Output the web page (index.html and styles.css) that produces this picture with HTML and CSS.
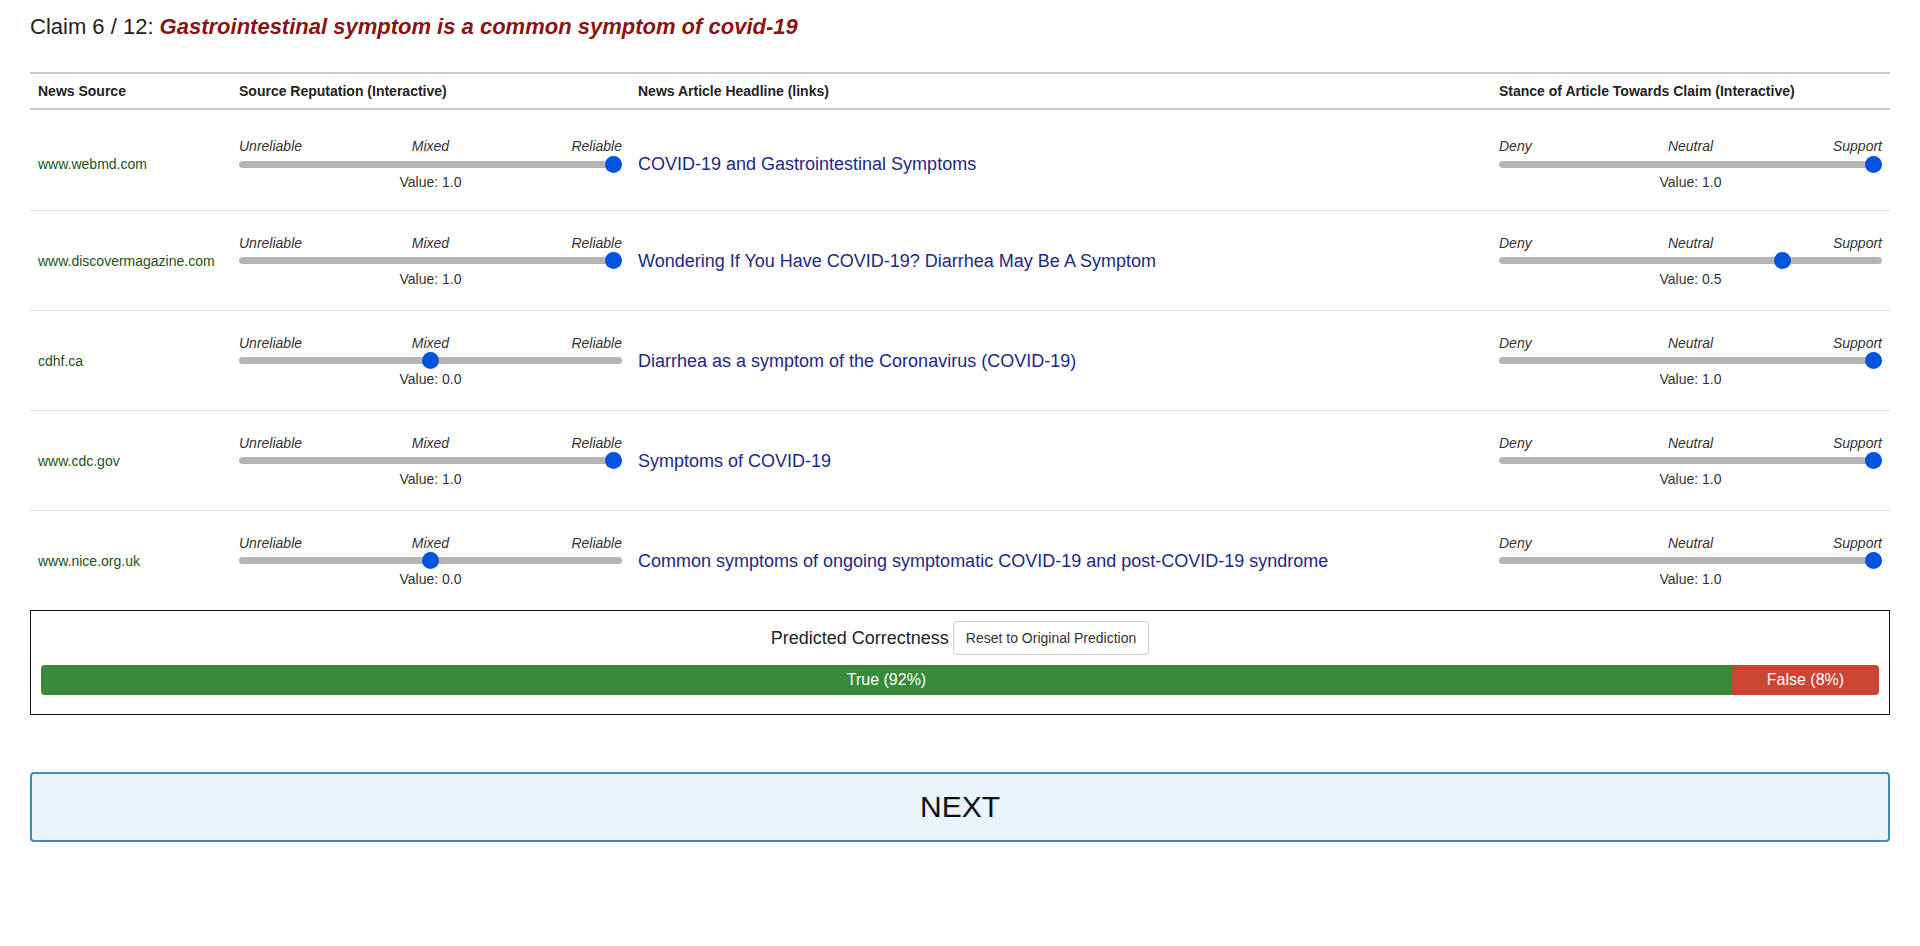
FILE: index.html
```html
<!DOCTYPE html>
<html lang="en">
<head>
<meta charset="utf-8">
<title>Claim 6 / 12</title>
<link rel="stylesheet" href="styles.css">
</head>
<body>
<div class="page">
  <h1 class="claim-title">Claim 6 / 12: <span class="claim-text">Gastrointestinal symptom is a common symptom of covid-19</span></h1>

  <div class="claim-table">
    <div class="row head">
      <div class="cell">News Source</div>
      <div class="cell">Source Reputation (Interactive)</div>
      <div class="cell">News Article Headline (links)</div>
      <div class="cell">Stance of Article Towards Claim (Interactive)</div>
    </div>

    <div class="row body">
      <div class="cell source">www.webmd.com</div>
      <div class="cell">
        <div class="slider">
          <div class="scale"><span class="l">Unreliable</span><span class="m">Mixed</span><span class="r">Reliable</span></div>
          <input type="range" min="-1" max="1" step="0.5" value="1">
          <div class="value">Value: 1.0</div>
        </div>
      </div>
      <div class="cell headline"><a href="#">COVID-19 and Gastrointestinal Symptoms</a></div>
      <div class="cell">
        <div class="slider">
          <div class="scale"><span class="l">Deny</span><span class="m">Neutral</span><span class="r">Support</span></div>
          <input type="range" min="-1" max="1" step="0.5" value="1">
          <div class="value">Value: 1.0</div>
        </div>
      </div>
    </div>

    <div class="row body">
      <div class="cell source">www.discovermagazine.com</div>
      <div class="cell">
        <div class="slider">
          <div class="scale"><span class="l">Unreliable</span><span class="m">Mixed</span><span class="r">Reliable</span></div>
          <input type="range" min="-1" max="1" step="0.5" value="1">
          <div class="value">Value: 1.0</div>
        </div>
      </div>
      <div class="cell headline"><a href="#">Wondering If You Have COVID-19? Diarrhea May Be A Symptom</a></div>
      <div class="cell">
        <div class="slider">
          <div class="scale"><span class="l">Deny</span><span class="m">Neutral</span><span class="r">Support</span></div>
          <input type="range" min="-1" max="1" step="0.5" value="0.5">
          <div class="value">Value: 0.5</div>
        </div>
      </div>
    </div>

    <div class="row body">
      <div class="cell source">cdhf.ca</div>
      <div class="cell">
        <div class="slider">
          <div class="scale"><span class="l">Unreliable</span><span class="m">Mixed</span><span class="r">Reliable</span></div>
          <input type="range" min="-1" max="1" step="0.5" value="0">
          <div class="value">Value: 0.0</div>
        </div>
      </div>
      <div class="cell headline"><a href="#">Diarrhea as a symptom of the Coronavirus (COVID-19)</a></div>
      <div class="cell">
        <div class="slider">
          <div class="scale"><span class="l">Deny</span><span class="m">Neutral</span><span class="r">Support</span></div>
          <input type="range" min="-1" max="1" step="0.5" value="1">
          <div class="value">Value: 1.0</div>
        </div>
      </div>
    </div>

    <div class="row body">
      <div class="cell source">www.cdc.gov</div>
      <div class="cell">
        <div class="slider">
          <div class="scale"><span class="l">Unreliable</span><span class="m">Mixed</span><span class="r">Reliable</span></div>
          <input type="range" min="-1" max="1" step="0.5" value="1">
          <div class="value">Value: 1.0</div>
        </div>
      </div>
      <div class="cell headline"><a href="#">Symptoms of COVID-19</a></div>
      <div class="cell">
        <div class="slider">
          <div class="scale"><span class="l">Deny</span><span class="m">Neutral</span><span class="r">Support</span></div>
          <input type="range" min="-1" max="1" step="0.5" value="1">
          <div class="value">Value: 1.0</div>
        </div>
      </div>
    </div>

    <div class="row body">
      <div class="cell source">www.nice.org.uk</div>
      <div class="cell">
        <div class="slider">
          <div class="scale"><span class="l">Unreliable</span><span class="m">Mixed</span><span class="r">Reliable</span></div>
          <input type="range" min="-1" max="1" step="0.5" value="0">
          <div class="value">Value: 0.0</div>
        </div>
      </div>
      <div class="cell headline"><a href="#">Common symptoms of ongoing symptomatic COVID-19 and post-COVID-19 syndrome</a></div>
      <div class="cell">
        <div class="slider">
          <div class="scale"><span class="l">Deny</span><span class="m">Neutral</span><span class="r">Support</span></div>
          <input type="range" min="-1" max="1" step="0.5" value="1">
          <div class="value">Value: 1.0</div>
        </div>
      </div>
    </div>
  </div>

  <div class="prediction">
    <div class="prediction-head">
      <span class="prediction-label">Predicted Correctness</span>
      <button class="btn-reset" type="button">Reset to Original Prediction</button>
    </div>
    <div class="progress">
      <div class="bar bar-true" style="width: 92%">True (92%)</div>
      <div class="bar bar-false" style="width: 8%">False (8%)</div>
    </div>
  </div>

  <button class="btn-next" type="button">NEXT</button>
</div>
</body>
</html>
```

FILE: styles.css
```css
* { box-sizing: border-box; }

html, body {
  margin: 0;
  padding: 0;
  background: #ffffff;
}

body {
  font-family: "Liberation Sans", Arial, Helvetica, sans-serif;
  font-size: 14px;
  color: #333333;
}

.page {
  padding: 14px 30px 0 30px;
}

.claim-title {
  margin: 0;
  font-size: 22px;
  line-height: 26px;
  font-weight: normal;
  color: #222222;
}

.claim-text {
  font-weight: bold;
  font-style: italic;
  color: #8b1313;
}

.claim-table {
  margin-top: 32px;
}

.row {
  display: grid;
  grid-template-columns: 201px 399px 861px 399px;
}

.cell {
  padding: 0 8px;
}

.row.head {
  border-top: 2px solid #cccccc;
  border-bottom: 2px solid #cccccc;
  padding: 7px 0;
  line-height: 20px;
  font-weight: bold;
  font-size: 14px;
  color: #222222;
}

.row.body {
  height: 100px;
  align-items: center;
  border-top: 1px solid #dddddd;
}

.row.head + .row.body {
  border-top: none;
  padding-top: 8px;
}

.source {
  color: #175417;
  font-size: 14px;
  line-height: 16px;
}

.headline {
  font-size: 18px;
  line-height: 22px;
}

.headline a {
  color: #1e2884;
  text-decoration: none;
}

.slider {
  display: flex;
  flex-direction: column;
}

.scale {
  display: grid;
  grid-template-columns: 1fr auto 1fr;
  font-style: italic;
  font-size: 14px;
  line-height: 16px;
  color: #333333;
}

.scale .l { text-align: left; }
.scale .m { text-align: center; }
.scale .r { text-align: right; }

.slider input[type="range"] {
  -webkit-appearance: none;
  appearance: none;
  display: block;
  width: 100%;
  height: 20px;
  margin: 0;
  padding: 0;
  background: transparent;
}

.slider input[type="range"]::-webkit-slider-runnable-track {
  height: 7px;
  background: #b5b5b5;
  border-radius: 4px;
}

.slider input[type="range"]::-webkit-slider-thumb {
  -webkit-appearance: none;
  appearance: none;
  width: 17px;
  height: 17px;
  margin-top: -5px;
  border: none;
  border-radius: 50%;
  background: #0053dc;
}

.value {
  text-align: center;
  font-size: 14px;
  line-height: 16px;
  color: #333333;
}

.prediction {
  border: 1px solid #111111;
  padding: 10px 10px 19px 10px;
}

.prediction-head {
  display: flex;
  justify-content: center;
  align-items: center;
  gap: 4px;
  margin-bottom: 10px;
}

.prediction-label {
  font-size: 18px;
  color: #222222;
}

.btn-reset {
  font-family: inherit;
  font-size: 14px;
  line-height: 20px;
  padding: 6px 12px;
  color: #333333;
  background: #ffffff;
  border: 1px solid #cccccc;
  border-radius: 4px;
}

.progress {
  display: flex;
  height: 30px;
  border-radius: 4px;
  overflow: hidden;
}

.bar {
  color: #ffffff;
  font-size: 16px;
  line-height: 30px;
  text-align: center;
}

.bar-true { background: #388b3a; }
.bar-false { background: #cc4433; }

.btn-next {
  display: block;
  width: 100%;
  height: 70px;
  margin-top: 57px;
  font-family: inherit;
  font-size: 30px;
  color: #111111;
  background: #eaf3fb;
  border: 2px solid #3f8cb2;
  border-radius: 4px;
}
```
